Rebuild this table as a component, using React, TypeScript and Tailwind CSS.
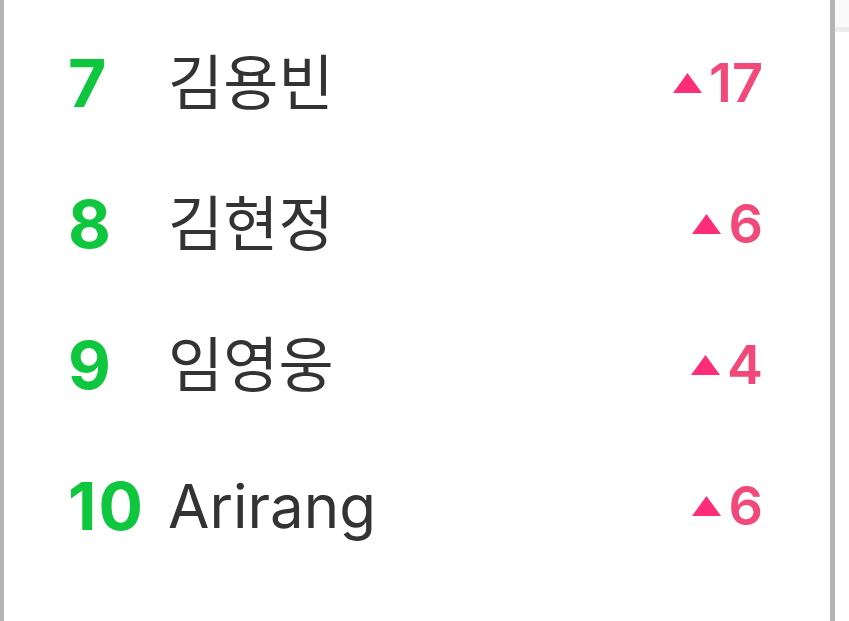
import React from "react";

const rows = [
  { rank: "7", name: "김용빈", change: "17" },
  { rank: "8", name: "김현정", change: "6" },
  { rank: "9", name: "임영웅", change: "4" },
  { rank: "10", name: "Arirang", change: "6" },
];

function Up() {
  return (
    <svg width="31" height="22" viewBox="0 0 31 22" className="shrink-0">
      <polygon points="15.5,1 30,21 1,21" fill="#ff2d78" />
    </svg>
  );
}

export default function App() {
  return (
    <div className="flex h-[621px] w-[849px] bg-white overflow-hidden">
      <div className="w-[4px] shrink-0 bg-[#b5b5b5]" />
      <div className="flex-1 pt-[12px]">
        {rows.map((r) => (
          <div key={r.rank} className="flex h-[141px] items-center pl-[64px] pr-[67px]">
            <div
              className="w-[100px] shrink-0 text-[66px] font-bold leading-none tracking-[2px] text-[#0fc63f]"
              style={{ fontFamily: 'Inter, sans-serif' }}
            >
              {r.rank}
            </div>
            <div
              className="flex-1 text-[60px] leading-none text-[#333333]"
              style={{ fontFamily: 'Inter, "Noto Sans CJK KR", sans-serif' }}
            >
              {r.name}
            </div>
            <div className="flex items-center gap-[6px]">
              <Up />
              <span
                className="text-[54px] font-semibold leading-none text-[#f2497b]"
                style={{ fontFamily: 'Inter, sans-serif' }}
              >
                {r.change}
              </span>
            </div>
          </div>
        ))}
      </div>
      <div className="w-[5px] shrink-0 bg-[#b5b5b5]" />
      <div className="flex w-[14px] shrink-0 flex-col">
        <div className="h-[27px] bg-[#fafafa]" />
        <div className="h-[5px] bg-[#ededed]" />
        <div className="flex-1 bg-white" />
      </div>
    </div>
  );
}
